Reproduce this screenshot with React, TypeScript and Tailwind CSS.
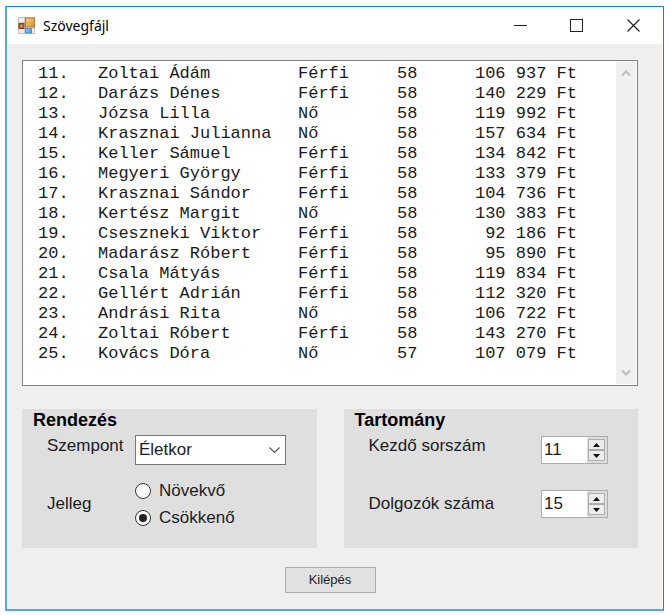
import { useState } from "react";

type Row = { no: number; name: string; sex: string; age: number; pay: string };

const rows: Row[] = [
  { no: 11, name: "Zoltai Ádám", sex: "Férfi", age: 58, pay: "106 937 Ft" },
  { no: 12, name: "Darázs Dénes", sex: "Férfi", age: 58, pay: "140 229 Ft" },
  { no: 13, name: "Józsa Lilla", sex: "Nő", age: 58, pay: "119 992 Ft" },
  { no: 14, name: "Krasznai Julianna", sex: "Nő", age: 58, pay: "157 634 Ft" },
  { no: 15, name: "Keller Sámuel", sex: "Férfi", age: 58, pay: "134 842 Ft" },
  { no: 16, name: "Megyeri György", sex: "Férfi", age: 58, pay: "133 379 Ft" },
  { no: 17, name: "Krasznai Sándor", sex: "Férfi", age: 58, pay: "104 736 Ft" },
  { no: 18, name: "Kertész Margit", sex: "Nő", age: 58, pay: "130 383 Ft" },
  { no: 19, name: "Cseszneki Viktor", sex: "Férfi", age: 58, pay: "92 186 Ft" },
  { no: 20, name: "Madarász Róbert", sex: "Férfi", age: 58, pay: "95 890 Ft" },
  { no: 21, name: "Csala Mátyás", sex: "Férfi", age: 58, pay: "119 834 Ft" },
  { no: 22, name: "Gellért Adrián", sex: "Férfi", age: 58, pay: "112 320 Ft" },
  { no: 23, name: "Andrási Rita", sex: "Nő", age: 58, pay: "106 722 Ft" },
  { no: 24, name: "Zoltai Róbert", sex: "Férfi", age: 58, pay: "143 270 Ft" },
  { no: 25, name: "Kovács Dóra", sex: "Nő", age: 57, pay: "107 079 Ft" },
];

function FormIcon() {
  return (
    <svg width="18" height="18" viewBox="0 0 18 18" aria-hidden="true">
      <defs>
        <linearGradient id="gold" x1="0" y1="0" x2="1" y2="1">
          <stop offset="0" stopColor="#f8d58e" />
          <stop offset="1" stopColor="#d98a25" />
        </linearGradient>
        <linearGradient id="sky" x1="0" y1="0" x2="1" y2="1">
          <stop offset="0" stopColor="#9dccf8" />
          <stop offset="1" stopColor="#3f8fe0" />
        </linearGradient>
      </defs>
      <rect x="0.5" y="0.5" width="16" height="16" fill="#eeeeee" stroke="#c4c4c4" />
      <path d="M6.5 1v15M1 11.5h15M1 5.5h5" stroke="#cccccc" />
      <rect x="7.5" y="1" width="9" height="9" fill="url(#gold)" stroke="#b9772a" />
      <rect x="1" y="6.5" width="5" height="5" fill="#b5622c" stroke="#8a3f17" />
      <rect x="2.5" y="8" width="2" height="2" fill="#e9a36c" />
      <rect x="7.5" y="11.5" width="6" height="4.5" fill="url(#sky)" stroke="#4c8fd4" />
    </svg>
  );
}

function ScrollArrow({ down }: { down?: boolean }) {
  return (
    <svg width="10" height="8" viewBox="0 0 10 8" fill="none" stroke="#bdbdbd" strokeWidth="2" aria-hidden="true">
      <path d={down ? "M1 1.5 5 5.5 9 1.5" : "M1 6.5 5 2.5 9 6.5"} />
    </svg>
  );
}

function Spinner({ id, initial }: { id: string; initial: number }) {
  const [value, setValue] = useState(initial);
  const step = "flex h-[11px] w-[17px] items-center justify-center border border-[#adadad] bg-[#ececec]";
  return (
    <div className="flex h-7 w-[67px] items-center border border-[#abadb3] bg-[#dedede] pr-[2px]">
      <input
        id={id}
        type="number"
        value={value}
        onChange={(e) => setValue(Number(e.target.value))}
        className="h-full min-w-0 flex-1 appearance-none border border-white bg-white pl-px text-[17px] outline-none [-moz-appearance:textfield] [&::-webkit-inner-spin-button]:appearance-none"
      />
      <div className="ml-px flex flex-col">
        <button type="button" aria-label="Növelés" className={step} onClick={() => setValue(value + 1)}>
          <svg width="7" height="4" viewBox="0 0 7 4"><path d="M3.5 0 7 4H0z" fill="#111" /></svg>
        </button>
        <button type="button" aria-label="Csökkentés" className={step} onClick={() => setValue(value - 1)}>
          <svg width="7" height="4" viewBox="0 0 7 4"><path d="M0 0h7L3.5 4z" fill="#111" /></svg>
        </button>
      </div>
    </div>
  );
}

function Radio({ label, checked, onSelect }: { label: string; checked: boolean; onSelect: () => void }) {
  return (
    <label className="flex h-[27px] items-center gap-2">
      <input
        type="radio"
        name="jelleg"
        checked={checked}
        onChange={onSelect}
        className="grid size-4 appearance-none place-items-center rounded-full border border-[#333] bg-white before:size-2 before:rounded-full checked:before:bg-[#222]"
      />
      {label}
    </label>
  );
}

export default function App() {
  const [key, setKey] = useState("Életkor");
  const [order, setOrder] = useState("desc");
  return (
    <div className="bg-white px-[5px] pt-[6px] pb-1 font-['Liberation_Sans',Arial,sans-serif] text-[17px] leading-[22px] text-[#1c1c24]">
      <main className="border border-b-2 border-l-2 border-t-[#1883d7] border-r-[#1883d7] border-b-[#5aa7e6] border-l-[#5aa7e6] bg-[#efefef]">
        <header className="flex h-[37px] items-center bg-white pl-[11px]">
          <FormIcon />
          <h1 className="ml-[7px] flex-1 font-['Noto_Sans','Open_Sans',sans-serif] text-sm text-black">Szövegfájl</h1>
          <button type="button" aria-label="Kis méret" className="flex h-9 w-14 items-center justify-center">
            <svg width="13" height="13" viewBox="0 0 13 13"><path d="M0 6.5h13" stroke="#222" /></svg>
          </button>
          <button type="button" aria-label="Teljes méret" className="flex h-9 w-14 items-center justify-center">
            <svg width="13" height="13" viewBox="0 0 13 13"><rect x="0.5" y="0.5" width="12" height="12" fill="none" stroke="#222" /></svg>
          </button>
          <button type="button" aria-label="Bezárás" className="flex h-9 w-[59px] items-center justify-center">
            <svg width="13" height="13" viewBox="0 0 13 13"><path d="m.5.5 12 12m0-12-12 12" stroke="#222" strokeWidth="1.2" /></svg>
          </button>
        </header>

        <div className="pt-4 pr-[25px] pb-4 pl-[15px]">
          <section className="flex border border-[#828282] bg-white">
            <div className="flex-1 pt-[3px] pb-[21px] pl-[15px]">
              <table className="table-fixed text-left font-['Liberation_Mono','Courier_New',monospace] leading-5 text-[#1a1a1a]">
                <colgroup>
                  <col className="w-[60px]" />
                  <col className="w-[200px]" />
                  <col className="w-[99px]" />
                  <col className="w-[60px]" />
                  <col className="w-[120px]" />
                </colgroup>
                <tbody>
                  {rows.map((r) => (
                    <tr key={r.no}>
                      <td>{r.no}.</td>
                      <td>{r.name}</td>
                      <td>{r.sex}</td>
                      <td>{r.age}</td>
                      <td className="text-right">{r.pay}</td>
                    </tr>
                  ))}
                </tbody>
              </table>
            </div>
            <div className="m-px flex w-5 flex-col items-center justify-between bg-[#f0f0f0] py-[7px]">
              <ScrollArrow />
              <ScrollArrow down />
            </div>
          </section>

          <div className="mt-[23px] grid grid-cols-2 gap-[27px]">
            <fieldset className="min-w-0 bg-[#dfdfdf] pb-[17px]">
              <legend className="float-left w-full pl-[11px] text-lg leading-[22px] font-bold text-black">Rendezés</legend>
              <div className="clear-both grid grid-cols-[88px_1fr] gap-y-3 pt-1 pl-[25px]">
                <label htmlFor="szempont">Szempont</label>
                <div className="relative h-[30px] w-[151px]">
                  <select
                    id="szempont"
                    value={key}
                    onChange={(e) => setKey(e.target.value)}
                    className="size-full appearance-none border border-[#777] bg-white pl-[3px] outline-none"
                  >
                    <option>Életkor</option>
                    <option>Név</option>
                    <option>Fizetés</option>
                  </select>
                  <svg width="11" height="7" viewBox="0 0 11 7" fill="none" stroke="#555" strokeWidth="1.2" className="pointer-events-none absolute top-3 right-[6px]">
                    <path d="m.5.5 5 5 5-5" />
                  </svg>
                </div>
                <span className="self-center">Jelleg</span>
                <div role="radiogroup" aria-label="Jelleg">
                  <Radio label="Növekvő" checked={order === "asc"} onSelect={() => setOrder("asc")} />
                  <Radio label="Csökkenő" checked={order === "desc"} onSelect={() => setOrder("desc")} />
                </div>
              </div>
            </fieldset>

            <fieldset className="min-w-0 bg-[#dfdfdf] pb-[17px]">
              <legend className="float-left w-full pl-[11px] text-lg leading-[22px] font-bold text-black">Tartomány</legend>
              <div className="clear-both flex flex-col gap-3 pt-1 pr-[30px] pl-[25px]">
                <div className="flex h-[30px] items-center justify-between">
                  <label htmlFor="kezdo" className="self-start">Kezdő sorszám</label>
                  <Spinner id="kezdo" initial={11} />
                </div>
                <div className="flex h-[54px] items-center justify-between">
                  <label htmlFor="szama">Dolgozók száma</label>
                  <Spinner id="szama" initial={15} />
                </div>
              </div>
            </fieldset>
          </div>

          <div className="mt-[19px] flex justify-center">
            <button type="button" className="h-[26px] w-[91px] border border-[#adadad] bg-[#e1e1e1] text-[13px] leading-5">
              Kilépés
            </button>
          </div>
        </div>
      </main>
    </div>
  );
}
